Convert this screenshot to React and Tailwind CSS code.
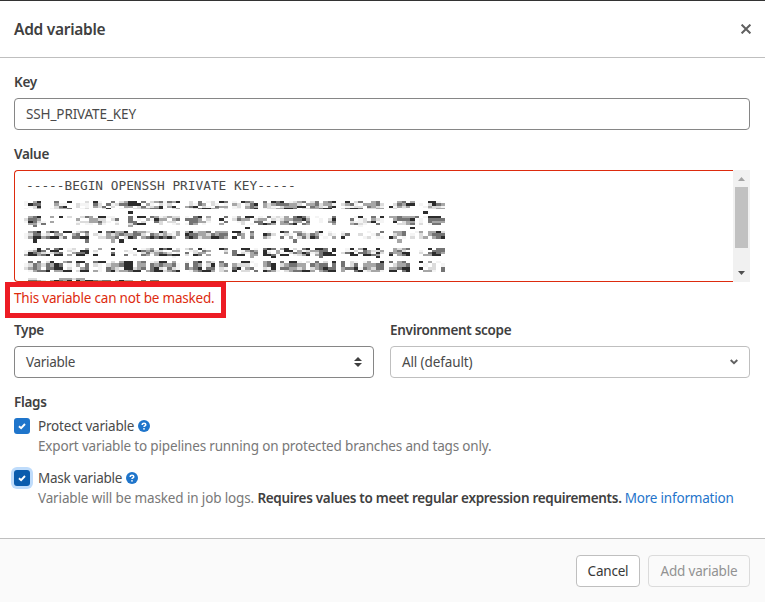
import React from "react";

// Shades of the redacted key blocks, from faint (1) to near black (5).
const SHADES = { 1: "#f4f4f4", 2: "#dcdcdc", 3: "#a6a6a6", 4: "#747474", 5: "#2c2c2c" };
const CELL = 4.34;

// Columns left empty between the blocks of each line.
const GAPS = [
  { until: 8, columns: [4, 5, 11, 15, 36, 47, 54, 72, 83, 90] },
  { until: 25, columns: [5, 9, 22, 23, 36, 43, 44, 47, 66, 69, 72, 73, 74, 83] },
  { until: 43, columns: [15, 36, 47, 53, 54, 72, 75, 76, 83, 88] },
  { until: 57, columns: [9, 15, 18, 19, 21, 22, 36, 43, 44, 47, 54, 72, 83, 89, 90] },
  { until: 73, columns: [11, 15, 36, 47, 54, 72, 83, 89, 90] },
];

const isGap = (top, column) => {
  const line = GAPS.find((g) => top < g.until);
  return line ? line.columns.includes(column) : false;
};

const REDACTED = [
  // [top, height, cells]
  [0, 2, "1.355..4..55..2451..4.2355.4.2341" + "4355.2.4.12.54.1.543.34.545.1234." + "24.345..5.24..34.5..34.3...551.4."],
  [2, 3, "1544.1.311.3211442.41244555.31.21" + "2..4.2143.21.1432.2454323444332.3" + "342331.2341.333422.24355.1.25432."],
  [5, 2, ".1251..245.22.11324.2..33.241235." + "35..345.21.433.12.343.321.233355." + "432145..1122.4321351323.5.13221.."],
  [7, 1, "1.233.12334..125..25..11.22334451" + ".233.1245533.2211.345512233554.22" + "33455.224554.2233112.1..5..223344"],
  [10, 3, "........................5........" + "................................." + "..........................5......"],
  [15, 2, ".345.23.552..243.5511.234.55.4312" + "322.1.45.3.2.4.13.55.1.41213.4542" + ".1.1.4....15..4.5.3343334.1555.45"],
  [17, 3, "2443.2...1..3..3322.24334.1.31533" + ".34.4443.21.5..2433.233.212334453" + "1.1.25..34.12.3214.34445.1.444434"],
  [20, 2, "1542113.....12233421.13344.2..42." + "22.3.44331.2.41.12..44.15.34.33.4" + "1.1.34.54211235.1..5.233.1.43331."],
  [22, 2, ".3314.......2.11.31..2432455...2." + ".12.143.1.2.3.1..2.1.4543.3345.43" + "1..1.3..33421..4.1..2234.2.144.3."],
  [24, 2, "..4.....................3........" + "...........3....................." + "...........1....................."],
  [26, 2, "................................." + "..................5.............." + ".......................5........."],
  [30, 2, ".345.354.55.2345.5.45335.43321.53" + ".13.352334.333.551.433.1..54.331." + ".35.1.11.....1..43.334..13.3352.1"],
  [32, 3, "124412.33..34.3421.323433442.4323" + "213454433243442.43.344542..21.432" + "431.21.24432..13.2.23431.2.344433"],
  [35, 3, "1355345524.44555.22334.254.345454" + "53.4454233554345.3.45432..4.3.242" + "54.1.345.3..12.11.53.1.2.23.345.1"],
  [38, 4, "..5...........4.....3.5.........." + ".............................4..." + "....................3............"],
  [47, 2, "..15.4.45.12..34.3.55.3..5.123.54" + "5.2.23.51..4542..55.14454.35.2.45" + ".554.5..15.35..5.5.3234.5..5.4455"],
  [49, 2, "12354.55.221.5542.44.2.21.543422." + ".332.12.432..254.1343251.3.55.312" + "3344.54.1.2.43223..342.5.1..44432"],
  [51, 2, "1543212345.344551.33445.11.242343" + "2.154.233.12.354.2134452.31.24354" + "12455.2245.443152.433551.2.454322"],
  [53, 2, "355345.5533.551.5.335544.2.43.355" + "45512.54.335..3455.334554.55.1235" + ".345554..55.5543.25.34554.3355.44"],
  [55, 2, "................................." + ".1............4....3....5........" + "..4............5................."],
  [60, 2, ".4.4.25..34.55.2455.2.355.34.1255" + ".3..1.45.32.4.1..551.334..4.551.2" + ".4.2.544.21.13..5.4.34.445.3.1.5."],
  [62, 4, "124324354.123.4521.233455.33.4343" + "34124.43.25.3443222.12345.234433." + "4344.444.24.333445.233445.1.2.132"],
  [66, 3, "2343.4455.21.342.1.432155234.4521" + "42134345.44.21345.34.4215.443323." + "234544.34451432442334554.5.22.44."],
  [69, 2, ".13445.3355.255331.45233455.34552" + "3455.134553.2345.22.455431.234455" + "3.345533..4512331255.45.1.331.45."],
  [77, 2, ".22.....333233..."],
  [79, 1, ".4432.35435.53554344.3533..4.44.."],
  [80, 1, ".5454.55545.44545454.4545454.555"],
];

function RedactedKey() {
  return (
    <svg width="424" height="81" viewBox="0 0 424 81" className="block shrink-0">
      <clipPath id="key-width">
        <rect width="421" height="81" />
      </clipPath>
      <g clipPath="url(#key-width)" shapeRendering="crispEdges">
        {REDACTED.map(([top, height, cells]) =>
          cells.split("").map((c, i) =>
            c === "." || isGap(top, i) ? null : (
              <rect key={`${top}-${i}`} x={i * CELL} y={top} width={CELL} height={height} fill={SHADES[c]} />
            )
          )
        )}
      </g>
    </svg>
  );
}

function Help() {
  return (
    <svg width="12" height="12" viewBox="0 0 12 12" className="ml-1">
      <circle cx="6" cy="6" r="6" fill="#1f75cb" />
      <path d="M4.200 4.900C4.200 3.700 5 3.200 6 3.200s1.800.600 1.800 1.500C7.800 5.800 6 5.800 6 7" fill="none" stroke="#fff" strokeWidth="1.500" />
      <circle cx="6" cy="8.800" r=".9" fill="#fff" />
    </svg>
  );
}

function Check({ focused }) {
  return (
    <span
      className={
        focused
          ? "flex size-4 items-center justify-center rounded-[3px] bg-[#0b5cad] ring-[3px] ring-[#bfdcfb]"
          : "flex size-4 items-center justify-center rounded-[3px] bg-[#1f75cb]"
      }
    >
      <svg width="8" height="8" viewBox="0 0 8 8">
        <path d="M1 4.200 3.100 6.200 7 2" fill="none" stroke="#fff" strokeWidth="1.900" />
      </svg>
    </span>
  );
}

const label = "h-5 font-semibold tracking-[-0.3px] text-[#404040]";

export default function App() {
  return (
    <div className="flex h-[602px] w-[765px] flex-col overflow-hidden border-t border-[#333] bg-white font-['Noto_Sans',sans-serif] text-[13.5px] leading-5 text-[#4a4a4a]">
      <header className="flex h-[57px] shrink-0 items-center justify-between border-b border-[#bfbfbf] px-[14px]">
        <h1 className="text-[15.5px] font-semibold tracking-[-0.28px] text-[#404040]">Add variable</h1>
        <svg width="10" height="10" viewBox="0 0 10 10">
          <path d="M.6.6 9.400 9.400M9.400.6.6 9.400" stroke="#606060" strokeWidth="2" />
        </svg>
      </header>

      <main className="flex flex-1 flex-col pt-[14px] pr-[15px] pl-[14px]">
        <div className={label}>Key</div>
        <div className="mt-1.5 flex h-8 shrink-0 items-center rounded border border-[#868686] px-[11px]">
          <span className="tracking-[-0.12px]">SSH_PRIVATE_KEY</span>
        </div>

        <div className={`mt-[14px] ${label}`}>Value</div>
        <div className="mt-1.5 flex h-28 shrink-0">
          <div className="flex-1 overflow-hidden rounded-l border border-r-0 border-[#dd2b0e] pt-[5px] pl-[9px]">
            <div className="h-[25px] pl-0.5 font-['DejaVu_Sans_Mono',monospace] text-[12.8px] leading-5 whitespace-pre">
              -----BEGIN OPENSSH PRIVATE KEY-----
            </div>
            <RedactedKey />
          </div>
          <div className="flex w-[17px] flex-col items-center bg-[#f1f1f1]">
            <svg width="7" height="4" viewBox="0 0 7 4" className="mt-[7px]">
              <path d="M0 4 3.500 0 7 4z" fill="#a3a3a3" />
            </svg>
            <div className="mt-1.5 h-[61px] w-[13px] bg-[#c1c1c1]" />
            <svg width="7" height="4" viewBox="0 0 7 4" className="mt-[23px]">
              <path d="M0 0h7L3.500 4z" fill="#505050" />
            </svg>
          </div>
        </div>

        <div className="-ml-[9px] flex h-9 w-[221px] shrink-0 items-center border-[5px] border-[#ed1c24] pl-1 text-[#dd2b0e]">
          <span className="-mt-1 whitespace-nowrap tracking-[-0.2px]">This variable can not be masked.</span>
        </div>

        <div className="mt-0.5 grid grid-cols-2 gap-4">
          <div>
            <div className={label}>Type</div>
            <div className="mt-1.5 flex h-8 items-center justify-between rounded border border-[#868686] px-[11px]">
              <span className="tracking-[-0.3px]">Variable</span>
              <svg width="8" height="10" viewBox="0 0 8 10">
                <path d="M0 4 4 0l4 4zM0 6h8L4 10z" fill="#404040" />
              </svg>
            </div>
          </div>
          <div>
            <div className={label}>Environment scope</div>
            <div className="mt-1.5 flex h-8 items-center justify-between rounded border border-[#bfbfbf] px-[11px]">
              <span className="tracking-[-0.12px]">All (default)</span>
              <svg width="8" height="6" viewBox="0 0 8 6">
                <path d="M.7 1 4 4.200 7.300 1" fill="none" stroke="#606060" strokeWidth="1.900" />
              </svg>
            </div>
          </div>
        </div>

        <div className={`mt-[14px] ${label}`}>Flags</div>
        <div className="mt-1 flex h-5 items-center">
          <Check />
          <span className="ml-2 tracking-[-0.2px]">Protect variable</span>
          <Help />
        </div>
        <p className="ml-6 whitespace-nowrap tracking-[-0.17px] text-[#787878]">
          Export variable to pipelines running on protected branches and tags only.
        </p>
        <div className="mt-3 flex h-5 items-center">
          <Check focused />
          <span className="ml-2 tracking-[-0.26px]">Mask variable</span>
          <Help />
        </div>
        <p className="ml-6 flex whitespace-pre text-[#787878]">
          <span className="tracking-[-0.14px]">Variable will be masked in job logs. </span>
          <strong className="font-semibold tracking-[-0.31px] text-[#404040]">
            Requires values to meet regular expression requirements.{" "}
          </strong>
          <a className="tracking-[-0.2px] text-[#1f75cb]">More information</a>
        </p>
      </main>

      <footer className="flex h-16 shrink-0 justify-end gap-2 border-t border-[#bfbfbf] bg-[#fafafa] pt-4 pr-[15px]">
        <button className="h-8 w-16 rounded border border-[#bfbfbf] bg-white tracking-[-0.2px] text-[#383838]">Cancel</button>
        <button className="h-8 w-[102px] rounded border border-[#dbdbdb] tracking-[-0.2px] whitespace-nowrap text-[#929292]">
          Add variable
        </button>
      </footer>
    </div>
  );
}
